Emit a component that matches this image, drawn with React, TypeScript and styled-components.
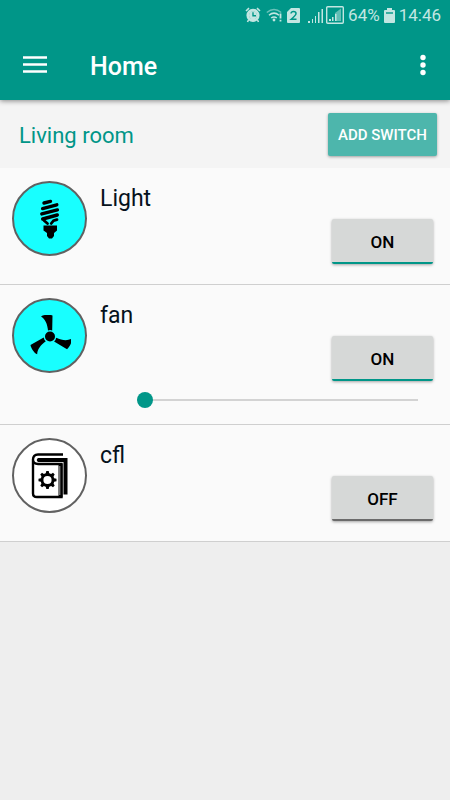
import React, { useState } from "react";
import styled, { createGlobalStyle } from "styled-components";

const teal = "#009688";

const GlobalStyle = createGlobalStyle`
  *, *::before, *::after { box-sizing: border-box; }
  html { background: #eeeeee; }
  body {
    margin: 0;
    background: #eeeeee;
    font-family: Roboto, "Liberation Sans", sans-serif;
    color: #06121c;
  }
`;

const TopArea = styled.header`
  position: relative;
  background: ${teal};
  color: #ffffff;
  box-shadow: 0 1px 5px rgba(0, 0, 0, 0.45);
`;

const StatusBar = styled.div`
  display: flex;
  align-items: center;
  justify-content: flex-end;
  height: 30px;
  padding-right: 9px;
  color: #c3e6e2;
  font-size: 17px;
  line-height: 30px;
`;

const StatusIcon = styled.svg<{ $gap?: number }>`
  display: block;
  flex: none;
  margin-right: ${(p) => p.$gap ?? 4}px;
`;

const StatusText = styled.span<{ $gap?: number }>`
  margin-right: ${(p) => p.$gap ?? 0}px;
`;

const AppBar = styled.div`
  display: flex;
  align-items: center;
  height: 70px;
  padding: 0 10px 0 15px;
`;

const IconButton = styled.button<{ $width: number }>`
  display: flex;
  align-items: center;
  justify-content: center;
  width: ${(p) => p.$width}px;
  height: 40px;
  margin: 0;
  padding: 0;
  border: 0;
  background: none;
  color: #ffffff;
  cursor: pointer;
`;

const Title = styled.h1`
  flex: 1;
  margin: 0 0 0 35px;
  padding-top: 4px;
  font-size: 25px;
  line-height: 30px;
  font-weight: 500;
`;

const RoomHeader = styled.div`
  display: flex;
  align-items: center;
  justify-content: space-between;
  height: 68px;
  padding: 0 13px 0 19px;
  background: #f4f4f4;
`;

const RoomName = styled.h2`
  margin: 0;
  padding-top: 4px;
  color: ${teal};
  font-size: 22px;
  line-height: 28px;
  font-weight: 400;
`;

const AddButton = styled.button`
  width: 109px;
  height: 43px;
  margin: 0;
  padding: 2px 0 0;
  border: 0;
  border-radius: 2px;
  background: #4db6ac;
  box-shadow: 0 1px 3px rgba(0, 0, 0, 0.35);
  color: #ffffff;
  font-family: inherit;
  font-size: 15px;
  font-weight: 500;
  cursor: pointer;
`;

const DeviceList = styled.ul`
  margin: 0;
  padding: 0;
  list-style: none;
`;

const DeviceRow = styled.li<{ $dimmable?: boolean }>`
  display: grid;
  grid-template-columns: 75px 1fr 101px;
  column-gap: 13px;
  padding: 13px 17px ${(p) => (p.$dimmable ? 16 : 20)}px 12px;
  border-bottom: 1px solid #cfcfcf;
  background: #fafafa;
`;

const Badge = styled.div<{ $on: boolean }>`
  display: flex;
  align-items: center;
  justify-content: center;
  width: 75px;
  height: 75px;
  border: 2px solid #616161;
  border-radius: 50%;
  background: ${(p) => (p.$on ? "#18ffff" : "#ffffff")};
  color: #000000;
`;

const DeviceName = styled.h3`
  margin: 0;
  padding-top: 4px;
  font-size: 23px;
  line-height: 28px;
  font-weight: 400;
`;

const ToggleButton = styled.button<{ $on: boolean }>`
  width: 101px;
  height: 45px;
  margin: 38px 0 0;
  padding: 3px 0 0;
  border: 0;
  border-bottom: 2px solid ${(p) => (p.$on ? teal : "#6b6b6b")};
  border-radius: 2px;
  background: #d6d8d7;
  box-shadow: 0 1px 3px rgba(0, 0, 0, 0.35);
  color: #000000;
  font-family: inherit;
  font-size: 17px;
  font-weight: 500;
  cursor: pointer;
`;

const Slider = styled.input`
  grid-column: 1 / -1;
  appearance: none;
  display: block;
  height: 16px;
  margin: 11px 15px 0 125px;
  background: none;

  &::-webkit-slider-runnable-track {
    height: 2px;
    background: #d3d3d3;
  }

  &::-webkit-slider-thumb {
    appearance: none;
    width: 16px;
    height: 16px;
    margin-top: -7px;
    border-radius: 50%;
    background: ${teal};
  }
`;

const BulbIcon = () => (
  <svg width="24" height="40" viewBox="0 0 24 40" aria-hidden="true">
    <g fill="none" stroke="currentColor" strokeWidth="3.400" strokeLinecap="round">
      <path d="M6 4 12.500 2.400M4.600 9.600 18.800 5.800M3.800 14.900 19.400 10.900M4.700 20 19.300 16" />
      <path d="M19 20.600 15.500 21.600 13.200 24.500M6 21.500 9.500 24.500" strokeWidth="2.800" />
    </g>
    <path
      d="M5.500 26.500H19V31.500L16 34V37L14 39.500H11L9 37V34L5.500 31.500Z"
      fill="currentColor"
    />
  </svg>
);

const FanIcon = () => (
  <svg width="42" height="42" viewBox="0 0 42 42" aria-hidden="true">
    <g fill="currentColor">
      <circle cx="21" cy="21.500" r="5" />
      {[0, 120, 240].map((angle) => (
        <path
          key={angle}
          transform={`rotate(${angle} 21 21.500)`}
          d="M19 15.500C18.500 9 16 4 12 1.500C14.500-.4 20-.8 23.500.4L23.200 15.500Q21 14.600 19 15.500Z"
        />
      ))}
    </g>
  </svg>
);

const BookIcon = () => (
  <svg width="38" height="46" viewBox="0 0 38 46" aria-hidden="true">
    <path d="M32 1.500H7Q2 1.500 2 6.500V40.500Q2 44 6 44H30.500V11H7Q2 11 2 6.500" fill="none" stroke="currentColor" strokeWidth="2.400" />
    <path d="M7 5H36.500V41.500H32.500V9H7Q4.500 7 7 5Z" fill="currentColor" />
    <path d="M29.500 11V44" stroke="currentColor" strokeWidth="4" />
    <path d="M28.800 13V42" stroke="#aaaaaa" strokeWidth="1" />
    <circle cx="16.500" cy="27" r="5.500" fill="none" stroke="currentColor" strokeWidth="2.800" />
    {[0, 45, 90, 135, 180, 225, 270, 315].map((angle) => (
      <path
        key={angle}
        d="M14.500 21.500 15.300 18H17.700L18.500 21.500Z"
        fill="currentColor"
        transform={`rotate(${angle} 16.500 27)`}
      />
    ))}
  </svg>
);

type Device = { name: string; icon: React.ReactNode; on: boolean; dimmable?: boolean };

const devices: Device[] = [
  { name: "Light", icon: <BulbIcon />, on: true },
  { name: "fan", icon: <FanIcon />, on: true, dimmable: true },
  { name: "cfl", icon: <BookIcon />, on: false },
];

function DeviceItem({ name, icon, on: initial, dimmable }: Device) {
  const [on, setOn] = useState(initial);
  return (
    <DeviceRow $dimmable={dimmable}>
      <Badge $on={on}>{icon}</Badge>
      <DeviceName>{name}</DeviceName>
      <ToggleButton
        type="button"
        $on={on}
        aria-pressed={on}
        aria-label={`${name} ${on ? "ON" : "OFF"}`}
        onClick={() => setOn(!on)}
      >
        {on ? "ON" : "OFF"}
      </ToggleButton>
      {dimmable && (
        <Slider type="range" min={0} max={100} defaultValue={0} aria-label={`${name} speed`} />
      )}
    </DeviceRow>
  );
}

const StatusIcons = () => (
  <>
    <StatusIcon $gap={5} width="16" height="16" viewBox="0 0 16 16" aria-hidden="true">
      <circle cx="8" cy="8.300" r="5.200" fill="none" stroke="currentColor" strokeWidth="2.800" />
      <circle cx="8" cy="8.300" r="4" fill="currentColor" />
      <path d="M8 5.200V8.800H11" fill="none" stroke={teal} strokeWidth="1.400" />
      <path d="M1 4 4 1.200M12 1.200 15 4M3.500 13 2.500 15M12.500 13 13.500 15" stroke="currentColor" strokeWidth="1.600" />
    </StatusIcon>
    <StatusIcon $gap={4} width="17" height="14" viewBox="0 0 17 14" aria-hidden="true">
      <g fill="none" stroke="currentColor" strokeWidth="1.500">
        <path d="M.8 4.500Q8 -1.500 15.200 4.500" opacity=".55" />
        <path d="M3 7.300Q8 3 13 7.300M5.200 10Q8 7.800 10.800 10" />
        <path d="M14.500 5.500V10.500M14.500 11.800V13.500" strokeWidth="1.800" />
      </g>
      <circle cx="8" cy="12" r="1.400" fill="currentColor" />
    </StatusIcon>
    <StatusIcon $gap={8} width="13" height="15" viewBox="0 0 13 15" aria-hidden="true">
      <path d="M4 0H12Q13 0 13 1V14Q13 15 12 15H1Q0 15 0 14V4Z" fill="currentColor" />
      <path d="M4 5.500Q4.300 3.600 6.500 3.600Q9 3.600 9 5.700Q9 7 4.200 11.200H9.500" fill="none" stroke={teal} strokeWidth="1.500" />
    </StatusIcon>
    <StatusIcon $gap={2} width="16" height="15" viewBox="0 0 16 15" aria-hidden="true">
      <path d="M0 15V13H2V15ZM4 15V11H5V15ZM7 15V8H8V15ZM10 15V4H11.500V15ZM13.500 15V1H15V15Z" fill="currentColor" />
    </StatusIcon>
    <StatusIcon $gap={4} width="18" height="18" viewBox="0 0 18 18" aria-hidden="true">
      <rect x=".7" y=".7" width="16.600" height="16.600" rx="1" fill="none" stroke="currentColor" strokeWidth="1.400" />
      <path d="M9 15V7L15 2.500V15Z" fill="currentColor" opacity=".5" />
      <path d="M3 15V13H5V15ZM6 15V11H7.500V15ZM9 15V8H10.500V15Z" fill="currentColor" />
    </StatusIcon>
  </>
);

export default function App() {
  return (
    <>
      <GlobalStyle />
      <TopArea>
        <StatusBar>
          <StatusIcons />
          <StatusText $gap={4}>64%</StatusText>
          <StatusIcon $gap={4} width="11" height="15" viewBox="0 0 11 15" aria-hidden="true">
            <path d="M3 0H8V2H10Q11 2 11 3V14Q11 15 10 15H1Q0 15 0 14V3Q0 2 1 2H3Z" fill="currentColor" />
            <path d="M2 4H9V6H2Z" fill={teal} opacity=".7" />
          </StatusIcon>
          <StatusText>14:46</StatusText>
        </StatusBar>
        <AppBar>
          <IconButton type="button" $width={40} aria-label="Open menu">
            <svg width="24" height="18" viewBox="0 0 24 18" aria-hidden="true">
              <path d="M0 1.500H24M0 8.500H24M0 15.500H24" stroke="currentColor" strokeWidth="2.600" />
            </svg>
          </IconButton>
          <Title>Home</Title>
          <IconButton type="button" $width={35} aria-label="More options">
            <svg width="6" height="22" viewBox="0 0 6 22" aria-hidden="true">
              <g fill="currentColor">
                <circle cx="3" cy="3.500" r="2.700" />
                <circle cx="3" cy="11" r="2.700" />
                <circle cx="3" cy="18.500" r="2.700" />
              </g>
            </svg>
          </IconButton>
        </AppBar>
      </TopArea>
      <main>
        <RoomHeader>
          <RoomName>Living room</RoomName>
          <AddButton type="button">ADD SWITCH</AddButton>
        </RoomHeader>
        <DeviceList>
          {devices.map((device) => (
            <DeviceItem key={device.name} {...device} />
          ))}
        </DeviceList>
      </main>
    </>
  );
}
